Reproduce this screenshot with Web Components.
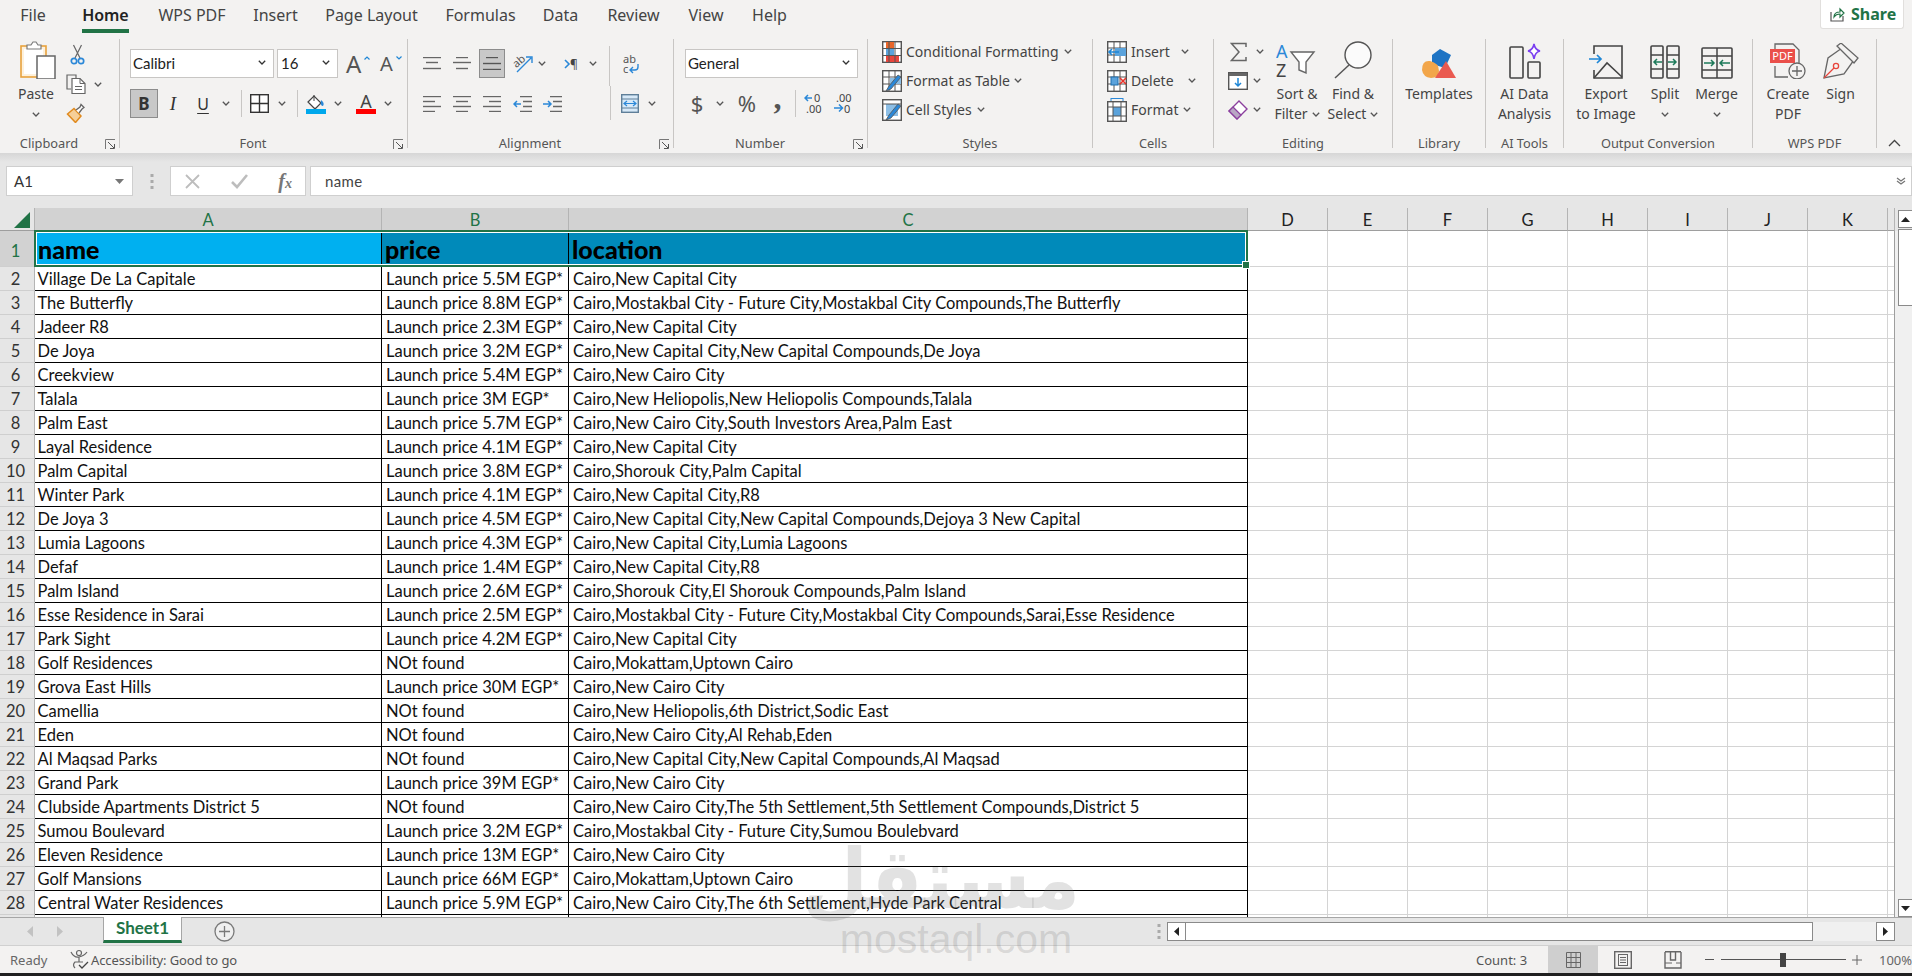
<!DOCTYPE html>
<html lang="en">
<head>
<meta charset="utf-8">
<title>Book1 - Excel</title>
<style>
html,body{margin:0;padding:0;height:100%;overflow:hidden;background:#f3f2f1}
</style>
</head>
<body>
<xl-app></xl-app>
<script>
const UI="'Noto Sans','Open Sans',sans-serif";
const GRID="Lato,'Noto Sans',sans-serif";
const GREEN='#217346';
const g=n=>`<i style="width:${n}px"></i>`;
const svg=(w,h,body,extra='')=>`<svg width="${w}" height="${h}" viewBox="0 0 ${w} ${h}" fill="none" style="flex:none;display:block;${extra}">${body}</svg>`;
const caret=(c='#555')=>svg(8,5,`<path d="M.8.8 4 4 7.2.8" stroke="${c}" stroke-width="1.3"/>`);
const bars=(w,h,list,c='#666')=>svg(w,h,list.map(([a,b,y,col])=>`<path d="M${a} ${y+.5}H${b}" stroke="${col||c}" stroke-width="1.4"/>`).join(''));
const vsep=(h=27,extra='')=>`<b class="vs" style="height:${h}px;${extra}"></b>`;

const ic={
  paste:svg(36,38,`<rect x="1" y="5" width="25" height="31" fill="#fdf1dc" stroke="#e8a23c" stroke-width="1.6"/><rect x="4" y="8" width="19" height="25" fill="#fff"/><path d="M7 8V4h4l2-3h3l2 3h3v4z" fill="#fff" stroke="#7a7a7a" stroke-width="1.2"/><rect x="17" y="15" width="18" height="23" fill="#fff" stroke="#666" stroke-width="1.5"/>`,'margin-left:4px'),
  cut:svg(15,21,`<path d="M3.5 1 10 14M11.5 1 5 14" stroke="#666" stroke-width="1.2"/><circle cx="4" cy="17" r="2.7" stroke="#2b88d8" stroke-width="1.7"/><circle cx="11" cy="17" r="2.7" stroke="#2b88d8" stroke-width="1.7"/>`),
  copy:svg(20,20,`<path d="M5 15H1V1h9v3" stroke="#666" stroke-width="1.2"/><path d="M6 4.500h8l5 5v10H6z" fill="#fff" stroke="#666" stroke-width="1.2"/><path d="M14 4.500v5h5M9 12.500h7M9 15.500h7" stroke="#666"/>`),
  brush:svg(20,20,`<path d="M1.500 11 8 5.500l7 7.500-5.500 6.500z" fill="#f6cf98" stroke="#e08a1e" stroke-width="1.500"/><path d="m10 7 4-3 1-2.500 3 3-2 1.500-3 4" fill="#fff" stroke="#666" stroke-width="1.300"/>`),
  launcher:svg(11,11,`<path d="M.5 10V.5H10" stroke="#777"/><path d="M3 3l6 6M5 9.500h4.500V5" stroke="#555"/>`),
  grid:svg(19,19,`<rect x=".7" y=".7" width="17.600" height="17.600" fill="#fff" stroke="#333" stroke-width="1.400"/><path d="M9.500 1v17M1 9.500h17" stroke="#333" stroke-width="1.400"/>`),
  fill:svg(20,20,`<path d="m2 8 6-6 7 7-5 5q-1 1-2 0z" fill="#fff" stroke="#444" stroke-width="1.200"/><path d="M8 1v6" stroke="#444"/><path d="M15 6q4 3 2 6-3 0-2-6z" fill="#2b88d8"/><rect y="15" width="20" height="5" fill="#00a8ec"/>`),
  fontA:svg(20,20,`<text x="10" y="14" text-anchor="middle" font-family="Noto Sans" font-size="18" fill="#444">A</text><rect y="15" width="20" height="5" fill="#f00"/>`),
  tAlignT:bars(18,13,[[0,18,0],[3,15,5],[0,18,11]]),
  tAlignM:bars(18,13,[[3,15,0],[0,18,5],[3,15,11]]),
  tAlignB:bars(18,13,[[3,15,0],[0,18,6],[0,18,12]],'#555'),
  ori:svg(20,19,`<text x="0" y="11" transform="rotate(-40 6 8)" font-family="Noto Sans" font-size="11" fill="#555">ab</text><path d="M4 18 18 4M13 3h6v6" stroke="#2b88d8" stroke-width="1.400"/>`),
  para:svg(16,12,`<path d="m1 2 4 4-4 4" stroke="#2b88d8" stroke-width="1.600"/><text x="6" y="11" font-family="Noto Sans" font-size="12" fill="#444">¶</text>`),
  wrap:svg(18,20,`<text x="1" y="9" font-family="Noto Sans" font-size="11" fill="#555">ab</text><text x="1" y="19" font-family="Noto Sans" font-size="11" fill="#555">c</text><path d="M16 10v3q0 3-3 3H8m3-3-3 3 3 3" stroke="#2b88d8" stroke-width="1.400"/>`),
  left:bars(18,16,[[0,18,0],[0,12,5],[0,18,10],[0,12,15]]),
  center:bars(18,16,[[0,18,0],[3,15,5],[0,18,10],[3,15,15]]),
  right:bars(18,16,[[0,18,0],[6,18,5],[0,18,10],[6,18,15]]),
  outdent:svg(19,16,`<path d="M7 .5h12M10 5.500h9M10 10.500h9M7 15.500h12" stroke="#666" stroke-width="1.400"/><path d="M8 8H1m3-3L1 8l3 3" stroke="#2b88d8" stroke-width="1.500"/>`),
  indent:svg(19,16,`<path d="M7 .5h12M10 5.500h9M10 10.500h9M7 15.500h12" stroke="#666" stroke-width="1.400"/><path d="M0 8h7M5 5l3 3-3 3" stroke="#2b88d8" stroke-width="1.500"/>`),
  merge:svg(18,19,`<rect x=".7" y=".7" width="16.600" height="17.600" fill="#d7e9f8" stroke="#5f7f99" stroke-width="1.400"/><path d="M1 5h16M1 14h16" stroke="#5f7f99"/><path d="M3 9.500h12M6 7 3 9.500 6 12M12 7l3 2.500-3 2.500" stroke="#2b88d8" stroke-width="1.200"/>`),
  decDec:svg(19,21,`<path d="M8 5H1m3-3L1 5l3 3" stroke="#2b88d8" stroke-width="1.500"/><text x="10" y="9" font-family="Noto Sans" font-size="11" fill="#444">0</text><text x="2" y="20" font-family="Noto Sans" font-size="11" fill="#444">.00</text>`),
  incDec:svg(19,21,`<text x="2" y="9" font-family="Noto Sans" font-size="11" fill="#444">.00</text><path d="M0 15h8M5 11.500 8.500 15 5 18.500" stroke="#2b88d8" stroke-width="1.500"/><text x="10" y="20" font-family="Noto Sans" font-size="11" fill="#444">0</text>`),
  cond:svg(20,22,`<rect x=".7" y=".7" width="18.600" height="20.600" fill="#fff" stroke="#555" stroke-width="1.400"/><rect x="4" y="1" width="8" height="6" fill="#e8662a"/><rect x="4" y="8" width="8" height="6" fill="#5ba3dc"/><rect x="4" y="15" width="13" height="6" fill="#e8453c"/><path d="M1 7.500h18M1 14.500h18M7 1v20M13 1v20" stroke="#555"/>`),
  fmtTable:svg(20,22,`<rect x=".7" y=".7" width="18.600" height="20.600" fill="#fff" stroke="#555" stroke-width="1.400"/><path d="M1 7h18M1 14h18M7 1v20M13 1v20" stroke="#555"/><path d="M8 8h11v6H8z" fill="#8dbfe6"/><path d="m4 21 3-5 9-11 3 2-10 12z" fill="#2b88d8" stroke="#555" stroke-width=".8"/>`),
  cellSt:svg(20,22,`<rect x=".7" y=".7" width="18.600" height="20.600" fill="#fff" stroke="#555" stroke-width="1.400"/><rect x="4" y="5" width="12" height="12" fill="#8dbfe6"/><path d="M1 5h18" stroke="#555"/><path d="m4 21 3-5 9-11 3 2-10 12z" fill="#2b88d8" stroke="#555" stroke-width=".8"/>`),
  insert:svg(20,22,`<rect x=".7" y=".7" width="18.600" height="20.600" fill="#fff" stroke="#555" stroke-width="1.400"/><path d="M1 7h18M1 14h18M7 1v20M13 1v20" stroke="#555"/><rect x="8" y="7" width="11" height="8" fill="#5ba3dc"/><path d="M12 11H2m3-3-3 3 3 3" stroke="#1e86d6" stroke-width="1.600"/>`),
  del:svg(20,22,`<rect x=".7" y=".7" width="18.600" height="20.600" fill="#fff" stroke="#555" stroke-width="1.400"/><path d="M1 7h18M1 14h18M7 1v20M13 1v20" stroke="#555"/><rect x="4" y="7" width="7" height="8" fill="#5ba3dc" stroke="#1e6fae"/><path d="m13 8 6 6m0-6-6 6" stroke="#e8332a" stroke-width="1.600"/>`),
  format:svg(20,24,`<path d="M4 .5h12M4 0v3M16 0v3" stroke="#2b88d8"/><rect x=".7" y="3.700" width="18.600" height="19.600" fill="#fff" stroke="#555" stroke-width="1.400"/><rect x="6" y="9" width="8" height="9" fill="#5ba3dc"/><path d="M1 9h18M1 18h18M6 4v19M14 4v19" stroke="#555"/>`),
  sigma:svg(17,20,`<path d="M16 5V1.500H1.500L9 10l-7.500 8.500H16V15" stroke="#666" stroke-width="1.500"/>`),
  down:svg(20,18,`<rect x=".7" y=".7" width="18.600" height="16.600" fill="#fff" stroke="#555" stroke-width="1.400"/><rect x="1" y="1" width="18" height="3" fill="#666"/><path d="M10 6v8m-3-3 3 3 3-3" stroke="#1e86d6" stroke-width="1.500"/>`),
  eraser:svg(20,20,`<path d="M1 11 11 1l8 8-10 10z" fill="#fff" stroke="#8b3f9e" stroke-width="1.400"/><path d="m5 7 8 8-4 4-8-8z" fill="#b9a6c4" stroke="#8b3f9e" stroke-width="1.200"/>`),
  sort:svg(42,36,`<text x="0" y="15" font-family="Noto Sans" font-size="18" fill="#2b88d8">A</text><text x="0" y="34" font-family="Noto Sans" font-size="18" fill="#444">Z</text><path d="M15 9h23l-8 10v11l-7-3v-8z" fill="#fff" stroke="#666" stroke-width="1.400"/>`),
  find:svg(38,38,`<circle cx="24" cy="14" r="13" fill="#fbfbfb" stroke="#555" stroke-width="1.400"/><path d="M15 24 1 37" stroke="#555" stroke-width="1.500"/>`),
  tpl:svg(34,30,`<path d="M10 6 18 0l11 6-6 13-13-4z" fill="#1f74c4"/><path d="M0 21Q0 11 8 12q9 2 9 10 0 7-8 7-8-1-9-8z" fill="#f2a64a"/><path d="M24 12l10 17H13z" fill="#ea5a50"/>`),
  ai:svg(32,36,`<rect x="1" y="4" width="13" height="31" rx="1" stroke="#444" stroke-width="1.600"/><rect x="19" y="19" width="12" height="16" rx="1" stroke="#444" stroke-width="1.600"/><path d="M25 1q1 6 6 7-5 1-6 8-1-7-6-8 5-1 6-7z" fill="#fff" stroke="#7a3ff0" stroke-width="1.600"/>`),
  exp:svg(34,34,`<path d="M5 9V1h28v32H5v-8" stroke="#444" stroke-width="1.600"/><path d="M5 33l13-15 15 14" stroke="#444" stroke-width="1.600"/><path d="M0 14h11M8 10l4 4-4 4" stroke="#1e86d6" stroke-width="1.700"/>`),
  split:svg(30,34,`<rect x="1" y="1" width="12" height="32" rx="1" stroke="#444" stroke-width="1.600"/><rect x="17" y="1" width="12" height="32" rx="1" stroke="#444" stroke-width="1.600"/><path d="M1 10h12M1 24h12M17 10h12M17 24h12" stroke="#444" stroke-width="1.500"/><path d="M12 17H4m3-3-3 3 3 3M18 17h8m-3-3 3 3-3 3" stroke="#1d7a5a" stroke-width="1.500"/>`),
  mrg:svg(32,32,`<rect x="1" y="1" width="30" height="30" rx="1" stroke="#444" stroke-width="1.600"/><path d="M1 9h30M1 23h30M16 1v30" stroke="#444" stroke-width="1.500"/><path d="M3 16h10m-3-3 3 3-3 3M29 16H19m3-3-3 3 3 3" stroke="#1d7a5a" stroke-width="1.500"/>`),
  pdf:svg(36,36,`<path d="M5 12V1h18l6 6v16M5 23v11h13" stroke="#666" stroke-width="1.300"/><rect y="6" width="25" height="14" fill="#ea4f4a"/><text x="12.500" y="17" text-anchor="middle" font-family="Noto Sans" font-size="11" fill="#fff">PDF</text><circle cx="27" cy="28" r="8" fill="#f3f2f1" stroke="#666" stroke-width="1.300"/><path d="M27 23v10m-5-5h10" stroke="#666" stroke-width="1.300"/>`),
  sign:svg(36,36,`<path d="M1 35 5 15 19 5 31 17 21 31z" stroke="#666" stroke-width="1.300"/><path d="m14 3 4-3 17 15-4 5z" fill="#f3f2f1" stroke="#666" stroke-width="1.300"/><circle cx="13" cy="23" r="2.600" stroke="#e8453c" stroke-width="1.300"/><path d="M11 25 1 35" stroke="#e8453c" stroke-width="1.300"/>`),
  share:svg(15,15,`<path d="M1 5v9h12V9" stroke="#555" stroke-width="1.200"/><path d="M4 10q0-5 6-5V2l4 4-4 4V7q-4 0-6 3z" fill="#fff" stroke="${GREEN}" stroke-width="1.200"/>`),
  fx:`<span style="font:italic bold 20px 'Liberation Serif',serif;color:#777">f<span style="font-size:14px">x</span></span>`
};

class XlTabs extends HTMLElement{
  constructor(){
    super();
    const tabs=[['File',60],['Home',85],['WPS PDF',88],['Insert',79],['Page Layout',113],['Formulas',105],['Data',55],['Review',91],['View',54],['Help',73]];
    this.attachShadow({mode:'open'}).innerHTML=`<style>
:host{display:flex;height:39px;padding-left:3px;background:#f3f2f1;font:16px ${UI};color:#444;box-sizing:border-box}
div{text-align:center;padding-top:3px;line-height:24px;white-space:nowrap}
span{display:inline-block;height:26px}
.on span{color:#222;font-weight:600;border-bottom:4px solid ${GREEN};letter-spacing:-.1px}
button{all:unset;margin-left:auto;margin-right:8px;width:84px;height:29px;box-sizing:border-box;background:#fff;border:1px solid #e1dfdd;border-top:0;border-radius:0 0 3px 3px;display:flex;align-items:center;gap:6px;padding-left:9px;color:${GREEN};font-weight:700;font-size:16px}
</style>${tabs.map(([t,w])=>`<div style="width:${w}px" class="${t==='Home'?'on':''}"><span>${t}</span></div>`).join('')}<button>${ic.share}Share</button>`;
  }
}

class XlGroup extends HTMLElement{
  constructor(){
    super();
    this.attachShadow({mode:'open'}).innerHTML=`<style>
:host{display:block;flex:none;box-sizing:border-box;height:109px;border-right:1px solid #c8c6c4;font:14px ${UI};color:#444}
.b{height:95px;display:flex;box-sizing:border-box}
.l{display:flex;height:18px;line-height:18px;font-size:12.800px;color:#555;white-space:nowrap}
.l span{flex:1;text-align:center}
.l em{display:flex;width:21px;align-items:center;justify-content:flex-end;padding:2px 3px 0 0;box-sizing:border-box}
</style><div class="b"><slot></slot></div><div class="l"><span></span></div>`;
  }
  connectedCallback(){
    const l=this.shadowRoot.querySelector('.l');
    l.firstChild.textContent=this.getAttribute('label');
    if(this.hasAttribute('launcher')&&!l.querySelector('em')) l.insertAdjacentHTML('beforeend',`<em>${ic.launcher}</em>`);
  }
}

class XlBig extends HTMLElement{
  constructor(){
    super();
    this.attachShadow({mode:'open'}).innerHTML=`<style>
:host{display:flex;flex:none;flex-direction:column;align-items:center;height:95px;font:14px/20px ${UI};color:#444;white-space:nowrap}
.i{height:45px;display:flex;align-items:flex-end;justify-content:center;padding-bottom:5px;box-sizing:border-box}
.t{display:flex;align-items:center;justify-content:center;gap:4px;height:20px}
</style><div class="i"><slot></slot></div>`;
  }
  connectedCallback(){
    const lines=(this.getAttribute('text')||'').split('|');
    const c=this.getAttribute('caret');
    const root=this.shadowRoot;
    lines.forEach((t,i)=>{
      const d=document.createElement('div');
      d.className='t';
      d.textContent=t;
      if(c===''&&i===lines.length-1) d.insertAdjacentHTML('beforeend',caret());
      root.appendChild(d);
    });
    if(c==='below'){
      const d=document.createElement('div');
      d.className='t';
      d.innerHTML=caret();
      root.appendChild(d);
    }
  }
}

class XlSelect extends HTMLElement{
  constructor(){
    super();
    this.attachShadow({mode:'open'}).innerHTML=`<style>
:host{display:flex;flex:none;align-items:center;box-sizing:border-box;height:29px;background:#fff;border:1px solid #c8c6c4;padding:0 7px 2px 2px;font:15px ${GRID};color:#222;justify-content:space-between}
</style><slot></slot>${caret('#333')}`;
  }
}

class XlRibbon extends HTMLElement{
  constructor(){
    super();
    const row=(w,text,icon,c=true)=>`<div class="r">${icon}${g(4)}<span style="width:${w}px">${text}</span>${c?caret():''}</div>`;
    this.attachShadow({mode:'open'}).innerHTML=`<style>
:host{display:flex;height:114px;background:#f3f2f1;flex:none;position:relative}
.r{display:flex;align-items:center;height:29px;white-space:nowrap}
.r>*{flex:none}
.c{display:flex;flex-direction:column;flex:none}
.t2{padding-top:10px;gap:11px}
.t2 .r{height:29px}
.c3 .r{height:29px}
.vs{display:block;width:1px;background:#c8c6c4}
.btn{display:flex;align-items:center;justify-content:center;box-sizing:border-box;height:29px;background:#c8c8c8;border:1px solid #8c8c8c}
.ch{font:22px/29px ${UI};color:#555;text-align:center}
.txt{color:#333;text-align:center}
i{display:block}
</style>
<xl-group label="Clipboard" launcher style="width:120px">
  ${g(6)}<xl-big text="Paste" caret="below" style="width:60px">${ic.paste}</xl-big>
  <div class="c">
    <div class="r" style="height:30px">${g(4)}${ic.cut}</div>
    <div class="r" style="height:30px">${ic.copy}${g(8)}${caret()}</div>
    <div class="r" style="height:30px;margin-top:-1px">${ic.brush}</div>
  </div>
</xl-group>
<xl-group label="Font" launcher style="width:288px">
  <div class="c t2" style="padding-left:10px">
    <div class="r"><xl-select style="width:144px">Calibri</xl-select>${g(3)}<xl-select style="width:61px;padding-left:3px">16</xl-select>${g(8)}
      <span style="font:24px ${UI};color:#555;width:19px;line-height:29px">A</span>${svg(6,4,`<path d="M.5 3.500 3 1l2.500 2.500" stroke="#1e86d6" stroke-width="1.200"/>`,'margin:-12px 0 0 -1px')}${g(10)}
      <span style="font:20px ${UI};color:#555;width:16px;line-height:29px">A</span>${svg(6,4,`<path d="M.5.5 3 3 5.500.5" stroke="#1e86d6" stroke-width="1.200"/>`,'margin:-12px 0 0 0')}
    </div>
    <div class="r">
      <span class="btn" style="width:28px;font:700 17px ${UI};color:#333">B</span>${g(7)}
      <span class="txt" style="width:16px;font:italic 19px 'Liberation Serif',serif">I</span>${g(14)}
      <span class="txt" style="width:16px;font:16px ${UI};text-decoration:underline;text-underline-offset:3px">U</span>${g(11)}${caret()}${g(11)}${vsep()}${g(8)}
      ${ic.grid}${g(9)}${caret()}${g(11)}${vsep()}${g(8)}
      ${ic.fill}${g(8)}${caret()}${g(14)}${ic.fontA}${g(8)}${caret()}
    </div>
  </div>
</xl-group>
<xl-group label="Alignment" launcher style="width:266px">
  <div class="c t2" style="padding-left:15px">
    <div class="r">${ic.tAlignT}${g(12)}${ic.tAlignM}${g(8)}<span class="btn" style="width:26px">${ic.tAlignB}</span>${g(8)}${ic.ori}${g(5)}${caret()}${g(18)}${ic.para}${g(9)}${caret()}${g(12)}${vsep(40,'margin-top:-3px;align-self:flex-start')}${g(12)}${ic.wrap}</div>
    <div class="r">${ic.left}${g(12)}${ic.center}${g(12)}${ic.right}${g(12)}${ic.outdent}${g(11)}${ic.indent}${g(48)}${vsep(34,'margin-top:-3px;align-self:flex-start')}${g(10)}${ic.merge}${g(9)}${caret()}</div>
  </div>
</xl-group>
<xl-group label="Number" launcher style="width:194px">
  <div class="c t2" style="padding-left:11px">
    <div class="r"><xl-select style="width:173px">General</xl-select></div>
    <div class="r"><span class="ch" style="width:14px;margin-left:5px">$</span>${g(12)}${caret()}${g(10)}<span class="ch" style="width:26px">%</span>${g(12)}<span class="ch" style="width:11px;font:700 32px/14px 'Liberation Serif',serif;height:26px">,</span>${g(12)}${vsep()}${g(8)}${ic.decDec}${g(11)}${ic.incDec}</div>
  </div>
</xl-group>
<xl-group label="Styles" style="width:225px">
  <div class="c c3" style="padding-left:14px;margin-top:-2px">
    ${row(158,'Conditional Formatting',ic.cond)}
    ${row(108,'Format as Table',ic.fmtTable)}
    ${row(71,'Cell Styles',ic.cellSt)}
  </div>
</xl-group>
<xl-group label="Cells" style="width:121px">
  <div class="c c3" style="padding-left:14px;margin-top:-2px">
    ${row(50,'Insert',ic.insert)}
    ${row(57,'Delete',ic.del)}
    ${row(52,'Format',ic.format)}
  </div>
</xl-group>
<xl-group label="Editing" style="width:179px">
  <div class="c c3" style="padding-left:14px;margin-top:-2px;width:42px">
    <div class="r">${g(2)}${ic.sigma}${g(9)}${caret()}</div>
    <div class="r">${ic.down}${g(5)}${caret()}</div>
    <div class="r">${ic.eraser}${g(5)}${caret()}</div>
  </div>
  <xl-big text="Sort &amp;|Filter" caret style="width:54px">${ic.sort}</xl-big>
  <xl-big text="Find &amp;|Select" caret style="width:58px">${ic.find}</xl-big>
</xl-group>
<xl-group label="Library" style="width:93px"><xl-big text="Templates" style="width:92px">${ic.tpl}</xl-big></xl-group>
<xl-group label="AI Tools" style="width:78px"><xl-big text="AI Data|Analysis" style="width:77px">${ic.ai}</xl-big></xl-group>
<xl-group label="Output Conversion" style="width:189px">
  <xl-big text="Export|to Image" style="width:84px">${ic.exp}</xl-big>
  <xl-big text="Split" caret="below" style="width:34px">${ic.split}</xl-big>
  <xl-big text="Merge" caret="below" style="width:69px">${ic.mrg}</xl-big>
</xl-group>
<xl-group label="WPS PDF" style="width:124px">
  <xl-big text="Create|PDF" style="width:70px">${ic.pdf}</xl-big>
  <xl-big text="Sign" style="width:35px">${ic.sign}</xl-big>
</xl-group>
<div style="flex:1;display:flex;align-items:flex-end;justify-content:center;padding-bottom:6px">${svg(13,8,`<path d="M1 7 6.500 1.500 12 7" stroke="#444" stroke-width="1.300"/>`)}</div>`;
  }
}

class XlFormula extends HTMLElement{
  constructor(){
    super();
    this.attachShadow({mode:'open'}).innerHTML=`<style>
:host{display:flex;flex:none;height:55px;box-sizing:border-box;padding:13px 0 12px 6px;background:linear-gradient(#d6d6d6,#e6e6e6 9px);font:15px ${GRID};color:#333}
div{box-sizing:border-box;background:#fff;border:1px solid #cfcfcf;display:flex;align-items:center;height:30px}
.n{width:127px;padding:0 8px 0 7px;justify-content:space-between}
.d{width:37px;background:none;border:0;justify-content:center}
.x{width:136px;justify-content:space-between;padding:0 13px 0 14px}
.f{flex:1;margin-left:4px;padding:0 5px 0 14px;justify-content:space-between;color:#444;letter-spacing:.4px}
</style>
<div class="n">A1${svg(9,5,`<path d="M0 0h9L4.500 5z" fill="#777"/>`)}</div>
<div class="d">${svg(4,15,`<path d="M2 0v3M2 6v3M2 12v3" stroke="#aaa" stroke-width="3"/>`)}</div>
<div class="x">${svg(15,15,`<path d="m1 1 13 13m0-13L1 14" stroke="#bdbdbd" stroke-width="1.800"/>`)}${svg(17,15,`<path d="m1 8 5 5L16 1" stroke="#bdbdbd" stroke-width="2.600"/>`)}${ic.fx}</div>
<div class="f">name${svg(10,8,`<path d="m1 1 4 3 4-3M1 4l4 3 4-3" stroke="#777" stroke-width="1.300"/>`)}</div>`;
  }
}

const DATA=[
['Village De La Capitale','Launch price 5.5M EGP*','Cairo,New Capital City'],
['The Butterfly','Launch price 8.8M EGP*','Cairo,Mostakbal City - Future City,Mostakbal City Compounds,The Butterfly'],
['Jadeer R8','Launch price 2.3M EGP*','Cairo,New Capital City'],
['De Joya','Launch price 3.2M EGP*','Cairo,New Capital City,New Capital Compounds,De Joya'],
['Creekview','Launch price 5.4M EGP*','Cairo,New Cairo City'],
['Talala','Launch price 3M EGP*','Cairo,New Heliopolis,New Heliopolis Compounds,Talala'],
['Palm East','Launch price 5.7M EGP*','Cairo,New Cairo City,South Investors Area,Palm East'],
['Layal Residence','Launch price 4.1M EGP*','Cairo,New Capital City'],
['Palm Capital','Launch price 3.8M EGP*','Cairo,Shorouk City,Palm Capital'],
['Winter Park','Launch price 4.1M EGP*','Cairo,New Capital City,R8'],
['De Joya 3','Launch price 4.5M EGP*','Cairo,New Capital City,New Capital Compounds,Dejoya 3 New Capital'],
['Lumia Lagoons','Launch price 4.3M EGP*','Cairo,New Capital City,Lumia Lagoons'],
['Defaf','Launch price 1.4M EGP*','Cairo,New Capital City,R8'],
['Palm Island','Launch price 2.6M EGP*','Cairo,Shorouk City,El Shorouk Compounds,Palm Island'],
['Esse Residence in Sarai','Launch price 2.5M EGP*','Cairo,Mostakbal City - Future City,Mostakbal City Compounds,Sarai,Esse Residence'],
['Park Sight','Launch price 4.2M EGP*','Cairo,New Capital City'],
['Golf Residences','NOt found','Cairo,Mokattam,Uptown Cairo'],
['Grova East Hills','Launch price 30M EGP*','Cairo,New Cairo City'],
['Camellia','NOt found','Cairo,New Heliopolis,6th District,Sodic East'],
['Eden','NOt found','Cairo,New Cairo City,Al Rehab,Eden'],
['Al Maqsad Parks','NOt found','Cairo,New Capital City,New Capital Compounds,Al Maqsad'],
['Grand Park','Launch price 39M EGP*','Cairo,New Cairo City'],
['Clubside Apartments District 5','NOt found','Cairo,New Cairo City,The 5th Settlement,5th Settlement Compounds,District 5'],
['Sumou Boulevard','Launch price 3.2M EGP*','Cairo,Mostakbal City - Future City,Sumou Boulebvard'],
['Eleven Residence','Launch price 13M EGP*','Cairo,New Cairo City'],
['Golf Mansions','Launch price 66M EGP*','Cairo,Mokattam,Uptown Cairo'],
['Central Water Residences','Launch price 5.9M EGP*','Cairo,New Cairo City,The 6th Settlement,Hyde Park Central'],
['','','']
];

class XlSheet extends HTMLElement{
  constructor(){
    super();
    const cols=['A','B','C','D','E','F','G','H','I','J','K',''];
    const heads=cols.map((c,i)=>`<div class="ch${i<3?' sel':''}">${c}</div>`).join('');
    const empty=`<div class="e"></div>`.repeat(9);
    const body=DATA.map((r,i)=>`<div class="rh">${i+2}</div>${r.map((t,j)=>`<div class="d${j?'':' a'}">${t}</div>`).join('')}${empty}`).join('');
    this.attachShadow({mode:'open'}).innerHTML=`<style>
:host{display:flex;flex:none;height:709px;background:#e6e6e6;font:16.5px ${GRID};color:#111}
.w{position:relative;width:1895px;height:709px;overflow:hidden;flex:none}
.g{display:grid;grid-template-columns:35px 347px 187px 679px repeat(8,80px) 7px;grid-template-rows:23px 36px repeat(28,24px)}
.g>div{box-sizing:border-box;white-space:nowrap;overflow:hidden}
.cn{background:#e6e6e6;border-right:1px solid #b4b4b4;border-bottom:1px solid #9e9e9e;display:flex;justify-content:flex-end;align-items:flex-end;padding:0 4px 2px 0}
.ch{background:#e6e6e6;border-right:1px solid #b4b4b4;border-bottom:1px solid #9e9e9e;text-align:center;line-height:24px;color:#222}
.ch.sel{background:#d2d2d2;color:${GREEN}}
.rh{background:#e6e6e6;border-right:1px solid #b4b4b4;border-bottom:1px solid #cfcfcf;text-align:center;line-height:24px;padding-right:3px;color:#333}
.rh.sel{background:#d2d2d2;color:${GREEN};line-height:40px}
.d{background:#fff;border-right:1px solid #000;border-bottom:1px solid #000;padding-left:4px;line-height:25px}
.d.a{padding-left:2.500px}
.e{background:#fff;border-right:1px solid #d4d4d4;border-bottom:1px solid #d4d4d4}
.h{border-right:1px solid #000;border-bottom:1px solid #000;font:900 25px/36px ${GRID};padding-left:3px;color:#000;background:#008aba}
.sb{position:absolute;left:34px;top:22px;width:1214px;height:37px;box-sizing:border-box;border:2px solid ${GREEN};box-shadow:inset 0 0 0 1px #fff}
.sb::after{content:"";position:absolute;right:-4px;bottom:-4px;width:6px;height:6px;background:${GREEN};border:1px solid #fff}
.edge{position:absolute;right:0;top:23px;bottom:0;width:1px;background:#9e9e9e}
.v{flex:1;display:flex;flex-direction:column;padding:2px 0 0 3px;background:linear-gradient(#e6e6e6 23px,#f0f0f0 23px)}
.v b{display:flex;align-items:center;justify-content:center;box-sizing:border-box;background:#fff;border:1px solid #8a8a8a;border-right:0;height:18px;flex:none}
.v u{display:block;flex:none;box-sizing:border-box;background:#fff;border:1px solid #8a8a8a;border-right:0;height:77px;margin-top:1px}
.v s{flex:1;display:block}
</style>
<div class="w">
  <div class="g">
    <div class="cn">${svg(16,16,`<path d="M16 0v16H0z" fill="${GREEN}"/>`)}</div>
    ${heads}
    <div class="rh sel">1</div>
    <div class="h" style="background:#00b0f0">name</div><div class="h">price</div><div class="h">location</div>${empty}
    ${body}
  </div>
  <div class="sb"></div>
  <div class="edge"></div>
</div>
<div class="v"><b>${svg(9,5,`<path d="M0 5h9L4.500 0z" fill="#222"/>`)}</b><u></u><s></s><b>${svg(9,5,`<path d="M0 0h9L4.500 5z" fill="#222"/>`)}</b></div>`;
  }
}

class XlSheetBar extends HTMLElement{
  constructor(){
    super();
    this.attachShadow({mode:'open'}).innerHTML=`<style>
:host{display:flex;flex:none;height:29px;box-sizing:border-box;background:#e6e6e6;border-top:1px solid #a6a6a6;border-bottom:1px solid #d0d0d0;font:17px ${GRID}}
.nav{width:103px;flex:none;display:flex;align-items:center;gap:24px;padding-left:27px;box-sizing:border-box}
.tab{width:79px;height:26px;flex:none;margin-top:-1px;box-sizing:border-box;background:#fff;border:1px solid #a6a6a6;border-top:0;border-bottom:3px solid ${GREEN};color:${GREEN};font-weight:700;text-align:center;line-height:21px}
.add{width:21px;height:21px;margin:3px 0 0 32px;flex:none}
.sp{flex:1}
.dots{width:17px;display:flex;justify-content:center;align-items:center}
.hs{display:flex;width:728px;height:19px;margin:4px 17px 0 0;background:#f0f0f0;flex:none}
.hs b{display:flex;align-items:center;justify-content:center;width:19px;height:19px;box-sizing:border-box;background:#fff;border:1px solid #8a8a8a;flex:none}
.hs u{display:block;width:627px;box-sizing:border-box;background:#fff;border:1px solid #8a8a8a;border-left:0}
.hs s{flex:1}
</style>
<div class="nav">${svg(6,11,`<path d="M6 0v11L0 5.500z" fill="#c2c2c2"/>`)}${svg(6,11,`<path d="M0 0v11l6-5.500z" fill="#c2c2c2"/>`)}</div>
<div class="tab">Sheet1</div>
<div class="add">${svg(21,21,`<circle cx="10.500" cy="10.500" r="9.500" fill="#f0f0f0" stroke="#7a7a7a" stroke-width="1.300"/><path d="M10.500 5v11M5 10.500h11" stroke="#7a7a7a" stroke-width="1.300"/>`)}</div>
<div class="sp"></div>
<div class="dots">${svg(4,15,`<path d="M2 0v3M2 6v3M2 12v3" stroke="#aaa" stroke-width="3"/>`)}</div>
<div class="hs"><b>${svg(5,9,`<path d="M5 0v9L0 4.500z" fill="#222"/>`)}</b><u></u><s></s><b>${svg(5,9,`<path d="M0 0v9l5-4.500z" fill="#222"/>`)}</b></div>`;
  }
}

class XlStatus extends HTMLElement{
  constructor(){
    super();
    this.attachShadow({mode:'open'}).innerHTML=`<style>
:host{display:flex;flex:none;height:27px;background:#f3f2f1;align-items:center;font:13px ${UI};color:#666;white-space:nowrap}
span{flex:none}
.v{flex:none;height:27px;display:flex;align-items:center;justify-content:center;box-sizing:border-box}
.sl{width:125px;height:1px;background:#555;flex:none;display:flex;align-items:center;padding-left:59px;box-sizing:border-box}
.sl b{display:block;width:6px;height:14px;background:#444;flex:none}
</style>
<span style="margin-left:10px;width:60px">Ready</span>
${svg(21,21,`<circle cx="9" cy="4" r="2.500" stroke="#666" stroke-width="1.200"/><path d="M1 3q3 6 8 5t8-5M9 8v5M5 19q-3-3 0-6h8" stroke="#666" stroke-width="1.200"/><path d="m9 16 3 3 6-6" stroke="#444" stroke-width="1.300"/>`)}
<span style="width:1385px;color:#555;letter-spacing:-.1px">Accessibility: Good to go</span>
<span style="width:72px;color:#555">Count: 3</span>
<div class="v" style="width:50px;background:#cfcfcf">${svg(15,16,`<path d="M.5.5h14v15H.5zM5 0v16M10 0v16M0 5.500h15M0 10.500h15" stroke="#666"/>`)}</div>
<div class="v" style="width:50px">${svg(18,18,`<rect x=".7" y=".7" width="16.600" height="16.600" stroke="#666" stroke-width="1.400"/><rect x="4.500" y="3.500" width="9" height="11" stroke="#666"/><path d="M6 6.500h6M6 9h6M6 11.500h6" stroke="#666"/>`)}</div>
<div class="v" style="width:50px">${svg(18,18,`<path d="M1 .7h16M1 1v16h16V1M6.500 1v8h5V1" stroke="#666" stroke-width="1.400"/><path d="M1 12h7M17 12h-5" stroke="#666"/>`)}</div>
<span style="margin-left:7px;width:9px;height:1px;background:#555"></span>
<span style="width:7px"></span>
<div class="sl"><b></b></div>
<span style="margin-left:6px;width:27px">${svg(10,10,`<path d="M5 0v10M0 5h10" stroke="#666"/>`)}</span>
<span>100%</span>`;
  }
}

class XlWatermark extends HTMLElement{
  constructor(){
    super();
    this.attachShadow({mode:'open'}).innerHTML=`<style>
:host{position:absolute;left:832px;top:840px;width:248px;text-align:center;pointer-events:none;color:rgba(110,110,110,.2);line-height:1}
div{font:700 76px/78px "DejaVu Sans",sans-serif;direction:rtl;transform:scaleY(1.100)}
p{margin:2px 0 0;font:41px/38px "Liberation Sans",sans-serif}
</style><div>مستقل</div><p>mostaql.com</p>`;
  }
}

class XlApp extends HTMLElement{
  constructor(){
    super();
    this.attachShadow({mode:'open'}).innerHTML=`<style>
:host{display:flex;flex-direction:column;position:relative;width:1912px;height:976px;overflow:hidden;background:#f3f2f1}
.end{height:3px;background:#202020;flex:none}
</style><xl-tabs></xl-tabs><xl-ribbon></xl-ribbon><xl-formula></xl-formula><xl-sheet></xl-sheet><xl-sheet-bar></xl-sheet-bar><xl-status></xl-status><div class="end"></div><xl-watermark></xl-watermark>`;
  }
}

customElements.define('xl-tabs',XlTabs);
customElements.define('xl-group',XlGroup);
customElements.define('xl-big',XlBig);
customElements.define('xl-select',XlSelect);
customElements.define('xl-ribbon',XlRibbon);
customElements.define('xl-formula',XlFormula);
customElements.define('xl-sheet',XlSheet);
customElements.define('xl-sheet-bar',XlSheetBar);
customElements.define('xl-status',XlStatus);
customElements.define('xl-watermark',XlWatermark);
customElements.define('xl-app',XlApp);
</script>
</body>
</html>
